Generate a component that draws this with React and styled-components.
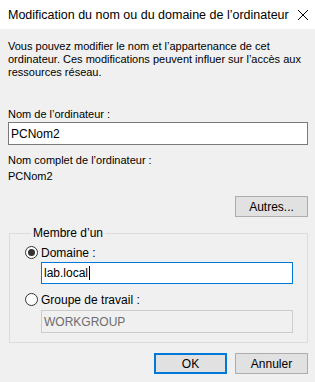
import styled, { createGlobalStyle } from 'styled-components';

const GlobalStyle = createGlobalStyle`
  html, body {
    margin: 0;
    padding: 0;
    background: #f0f0f0;
  }
  body {
    font-family: "Liberation Sans", Arial, sans-serif;
    font-size: 11px;
    color: #000;
  }
`;

const Dialog = styled.div`
  width: 315px;
  height: 382px;
  background: #f0f0f0;
  display: flex;
  flex-direction: column;
  overflow: hidden;
`;

const TitleBar = styled.div`
  height: 29px;
  background: #fff;
  display: flex;
  align-items: center;
  justify-content: space-between;
  padding: 0 6px 0 8px;
  box-sizing: border-box;
`;

const Title = styled.span`
  font-size: 12.5px;
`;

const CloseBtn = styled.span`
  display: flex;
  width: 12px;
  height: 12px;
`;

const Body = styled.div`
  padding: 11px 7px 0 8px;
  display: flex;
  flex-direction: column;
`;

const Text = styled.p`
  margin: ${({ $mt }) => $mt || 0}px 0 0;
  line-height: 13px;
`;

const TextInput = styled.div`
  height: ${({ $h }) => $h || 23}px;
  box-sizing: border-box;
  margin-top: ${({ $mt }) => $mt || 0}px;
  margin-left: ${({ $ml }) => $ml || 0}px;
  border: 1px solid ${({ $focus, $disabled }) => ($focus ? '#0078d7' : $disabled ? '#cccccc' : '#7a7a7a')};
  background: ${({ $disabled }) => ($disabled ? '#f0f0f0' : '#fff')};
  color: ${({ $disabled }) => ($disabled ? '#6d6d6d' : '#000')};
  display: flex;
  align-items: center;
  padding-left: 2px;
  font-size: 12px;
`;

const Caret = styled.span`
  display: inline-block;
  width: 1px;
  height: 14px;
  background: #000;
  margin-left: 1px;
`;

const ButtonRow = styled.div`
  display: flex;
  justify-content: flex-end;
  gap: 8px;
  margin-top: ${({ $mt }) => $mt || 0}px;
`;

const Button = styled.div`
  width: 73px;
  height: 21px;
  box-sizing: border-box;
  background: #e1e1e1;
  border: ${({ $default }) => ($default ? '2px solid #0078d7' : '1px solid #adadad')};
  display: flex;
  align-items: center;
  justify-content: center;
  font-size: 12px;
`;

const Group = styled.fieldset`
  margin: 10px 0 0 1px;
  padding: 5px 14px 9px 15px;
  border: 1px solid #dcdcdc;
  display: flex;
  flex-direction: column;
`;

const Legend = styled.legend`
  padding: 0 2px;
  margin-left: 6px;
  line-height: 13px;
  font-size: 12px;
`;

const RadioRow = styled.div`
  display: flex;
  align-items: center;
  gap: 3px;
  height: 15px;
  margin-top: ${({ $mt }) => $mt || 0}px;
  font-size: 12px;
`;

const RadioCircle = styled.span`
  width: 13px;
  height: 13px;
  box-sizing: border-box;
  border: 1px solid #333;
  border-radius: 50%;
  background: #fff;
  display: flex;
  align-items: center;
  justify-content: center;

  &::after {
    content: '';
    width: 7px;
    height: 7px;
    border-radius: 50%;
    background: #333;
    display: ${({ $checked }) => ($checked ? 'block' : 'none')};
  }
`;

export default function App() {
  return (
    <Dialog>
      <GlobalStyle />
      <TitleBar>
        <Title>Modification du nom ou du domaine de l’ordinateur</Title>
        <CloseBtn>
          <svg width="12" height="12" viewBox="0 0 12 12">
            <path d="M1 1 L11 11 M11 1 L1 11" stroke="#000" strokeWidth="1" fill="none" />
          </svg>
        </CloseBtn>
      </TitleBar>
      <Body>
        <Text>
          Vous pouvez modifier le nom et l’appartenance de cet ordinateur. Ces modifications peuvent influer sur l’accès aux ressources réseau.
        </Text>
        <Text $mt={29}>Nom de l’ordinateur :</Text>
        <TextInput $mt={1}>PCNom2</TextInput>
        <Text $mt={9}>Nom complet de l’ordinateur :</Text>
        <Text $mt={3}>PCNom2</Text>
        <ButtonRow $mt={13}>
          <Button>Autres...</Button>
        </ButtonRow>
        <Group>
          <Legend>Membre d’un</Legend>
          <RadioRow>
            <RadioCircle $checked />
            Domaine :
          </RadioRow>
          <TextInput $focus $h={22} $ml={16} $mt={2}>
            lab.local<Caret />
          </TextInput>
          <RadioRow $mt={8}>
            <RadioCircle />
            Groupe de travail :
          </RadioRow>
          <TextInput $disabled $ml={16} $mt={3}>WORKGROUP</TextInput>
        </Group>
        <ButtonRow $mt={10}>
          <Button $default>OK</Button>
          <Button>Annuler</Button>
        </ButtonRow>
      </Body>
    </Dialog>
  );
}
